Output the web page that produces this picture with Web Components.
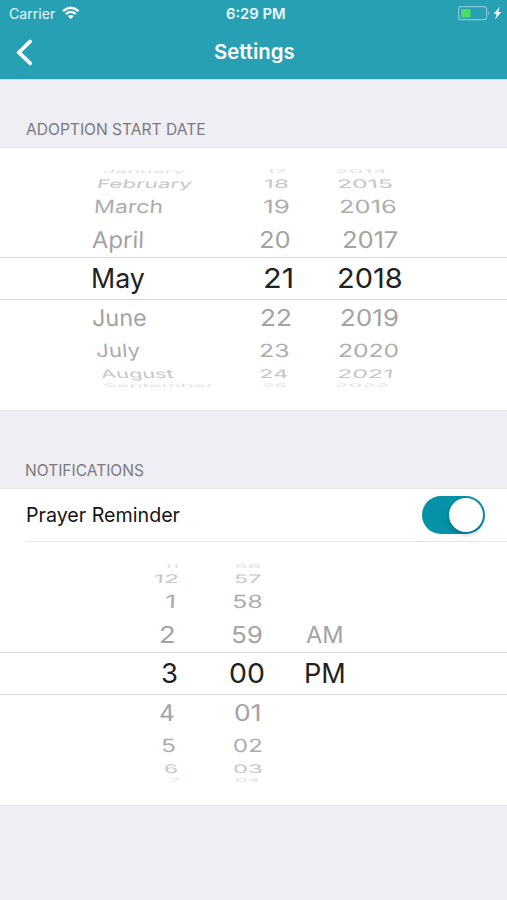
<!DOCTYPE html>
<html lang="en">
<head>
<meta charset="utf-8">
<title>Settings</title>
<style>
html,body{margin:0;background:#efeef4}
body{font-family:Inter,"Liberation Sans",sans-serif;width:507px;height:900px;overflow:hidden}
</style>
</head>
<body>
<settings-screen></settings-screen>
<script>
const ctx = document.createElement('canvas').getContext('2d');

/* One line of text whose ink runs from `start` to `end`, measured from the element's left edge. */
class FitText extends HTMLElement {
  connectedCallback() {
    const n = (k, d) => this.hasAttribute(k) ? parseFloat(this.getAttribute(k)) : d;
    const size = n('size', 27.5), weight = n('weight', 400), start = n('start', 0), end = n('end', 50);
    const sy = n('squash', 1), skew = n('skew', 0);
    ctx.font = `${weight} ${size}px Inter, "Liberation Sans", sans-serif`;
    const m = ctx.measureText(this.textContent);
    const sx = (end - start) / (m.actualBoundingBoxRight + m.actualBoundingBoxLeft);
    const left = start + m.actualBoundingBoxLeft * sx;
    this.attachShadow({mode: 'open'}).innerHTML = `<style>
      :host{display:flex;align-items:center;height:100%;min-width:0;min-height:0;white-space:nowrap}
      span{display:block;flex:none;font-size:${size}px;font-weight:${weight};line-height:1;
        margin-left:${left}px;transform-origin:0 50%;transform:skewX(${skew}deg) scale(${sx},${sy})}
      </style><span><slot></slot></span>`;
  }
}
customElements.define('fit-text', FitText);

class NavHeader extends HTMLElement {
  connectedCallback() {
    this.attachShadow({mode: 'open'}).innerHTML = `<style>
      :host{display:grid;grid-template-rows:28px 49px;height:80px;background:#27a0b4;color:#fff;border-bottom:1px solid #bfe2ec;box-sizing:border-box}
      .status,.bar{display:grid;grid-template-columns:62px 102px 282px 61px}
      .bar{grid-template-columns:164px 343px}
      .status{color:#e9fbfd}
      svg{display:block}
      </style>
      <div class="status">
        <fit-text size="14" start="9" end="55">Carrier</fit-text>
        <svg width="20" height="27" viewBox="0 0 20 27" fill="none" stroke="#fff" stroke-width="2.3">
          <path d="M1 11.1Q8.8 4.4 16.6 11.1"/><path d="M3.8 14Q8.8 9.7 13.8 14"/><path d="M5.9 16.1Q8.8 13.8 11.7 16.1L8.8 19.1Z" fill="#fff" stroke="none"/>
        </svg>
        <fit-text size="14.6" weight="600" start="62" end="121">6:29 PM</fit-text>
        <svg width="61" height="27" viewBox="0 0 61 27">
          <rect x="12.6" y="6.6" width="28" height="13" rx="2.6" fill="none" stroke="#84c9d4" stroke-width="1.2"/>
          <rect x="15" y="9" width="9.6" height="8.4" rx=".8" fill="#4ddc64"/>
          <path d="M42 11.2Q44.3 13.1 42 15Z" fill="#84c9d4"/>
          <path d="M53.6 7L47.6 14H50.6L49.2 19.4L55.2 12H52.2Z" fill="#fff"/>
        </svg>
      </div>
      <div class="bar">
        <svg width="60" height="49" viewBox="0 0 60 49"><path d="M30.2 13.4L18.9 24.4L30.2 35.4" fill="none" stroke="#fff" stroke-width="3.6" stroke-linecap="round" stroke-linejoin="miter"/></svg>
        <fit-text size="20.5" weight="600" start="50" end="130.5">Settings</fit-text>
      </div>`;
  }
}
customElements.define('nav-header', NavHeader);

class SectionTitle extends HTMLElement {
  connectedCallback() {
    this.attachShadow({mode: 'open'}).innerHTML = `<style>
      :host{display:block;box-sizing:border-box;color:#7a7a7f;border-bottom:1px solid #e4e4e9}
      div{height:36px}</style><div><slot></slot></div>`;
  }
}
customElements.define('section-title', SectionTitle);

class ToggleSwitch extends HTMLElement {
  connectedCallback() {
    this.attachShadow({mode: 'open'}).innerHTML = `<style>
      :host{display:flex;justify-content:flex-end;align-items:center;box-sizing:border-box;width:63px;height:38px;padding:2px;border-radius:19px;background:#0591a7;flex:none}
      i{width:34px;height:34px;border-radius:50%;background:#fff;box-shadow:0 3px 5px rgba(0,0,0,.2)}
      </style><i></i>`;
  }
}
customElements.define('toggle-switch', ToggleSwitch);

class SettingRow extends HTMLElement {
  connectedCallback() {
    this.attachShadow({mode: 'open'}).innerHTML = `<style>
      :host{display:flex;align-items:center;justify-content:space-between;height:52px;margin-left:26px;padding-right:22px;border-bottom:1px solid #e6e6e9;color:#151515}
      </style><slot></slot>`;
  }
}
customElements.define('setting-row', SettingRow);

/* Drum picker: nine rows, compressed and faded away from the selected one. */
class WheelPicker extends HTMLElement {
  connectedCallback() {
    const squash = [.17, .43, .66, .84, 1, .84, .66, .43, .17];
    const tint = ['#dedede', '#c6c6c6', '#adadad', '#a3a3a3', '#222', '#a3a3a3', '#adadad', '#c6c6c6', '#e0e0e0'];
    const skew = [-1.6, -1.3, -.5, -.2, 0, .2, .5, 1.3, 1.6];
    const cols = JSON.parse(this.querySelector('script').textContent);
    const rows = squash.map((s, i) => `<div class="row${i === 4 ? ' selected' : ''}" style="color:${tint[i]}">` + cols.map(c => {
      const v = c.items[i];
      return v ? `<fit-text start="${v[1]}" end="${v[2]}" squash="${s}" skew="${skew[i] * c.lean}">${v[0]}</fit-text>` : '';
    }).join('') + '</div>').join('');
    this.attachShadow({mode: 'open'}).innerHTML = `<style>
      :host{display:grid;grid-template-rows:9px 15px 31px 35px 43px 35px 31px 15px 9px;align-content:start}
      .row{display:grid;grid-template:minmax(0,1fr)/minmax(0,1fr);min-height:0;box-sizing:border-box}
      .row>*{grid-area:1/1}
      .selected{border:solid #d9d9db;border-width:1px 0}
      </style>${rows}`;
  }
}

class SettingsScreen extends HTMLElement {
  connectedCallback() {
    this.attachShadow({mode: 'open'}).innerHTML = `<style>
      :host{display:block;width:507px;height:900px;background:#efeef4}
      .date{padding-top:31px;height:68px}
      .notif{padding-top:41px;height:78px}
      .panel{background:#fff;box-sizing:border-box}
      .one{height:263px;padding-top:19px;border-bottom:1px solid #e6e6ea}
      .two{height:317px;border-bottom:1px solid #e6e6ea}
      .two wheel-picker{padding-top:20px}
      </style>
      <nav-header></nav-header>
      <section-title class="date"><fit-text size="16" start="26" end="205">ADOPTION START DATE</fit-text></section-title>
      <div class="panel one"><wheel-picker><script type="application/json">[
        {"lean":9,"items":[["January",104,185],["February",99,192],["March",95.5,162],["April",92,142.5],["May",92.5,144],["June",93,146],["July",96.5,139.5],["August",100.5,173],["September",104,214]]},
        {"lean":2,"items":[["17",267,286],["18",265,288],["19",264,289],["20",261,289.5],["21",265.5,292],["22",261.5,290],["23",261,289],["24",261,288],["25",263,286]]},
        {"lean":-5,"items":[["2014",337,387],["2015",338.5,392],["2016",341,396],["2017",343.5,397.5],["2018",339.5,402],["2019",342,398],["2020",340,398],["2021",338.5,391],["2022",337,388]]}
      ]<\/script></wheel-picker></div>
      <section-title class="notif"><fit-text size="16" start="26.3" end="144">NOTIFICATIONS</fit-text></section-title>
      <div class="panel two">
        <setting-row><fit-text size="20" start="0.5" end="154">Prayer Reminder</fit-text><toggle-switch></toggle-switch></setting-row>
        <wheel-picker><script type="application/json">[
        {"lean":5,"items":[["11",165,178],["12",154.5,177],["1",166,174],["2",161,174],["3",162,177],["4",160,174],["5",163,175.5],["6",164.5,177],["7",171,180]]},
        {"lean":2,"items":[["56",236,261],["57",236,261],["58",234,262],["59",233,262],["00",230.5,264],["01",235,259.5],["02",233.5,261],["03",234,262],["04",236,260]]},
        {"lean":0,"items":[null,null,null,["AM",306,342],["PM",305.5,343.5]]}
        ]<\/script></wheel-picker>
      </div>`;
  }
}
customElements.define('wheel-picker', WheelPicker);
customElements.define('settings-screen', SettingsScreen);
</script>
</body>
</html>
